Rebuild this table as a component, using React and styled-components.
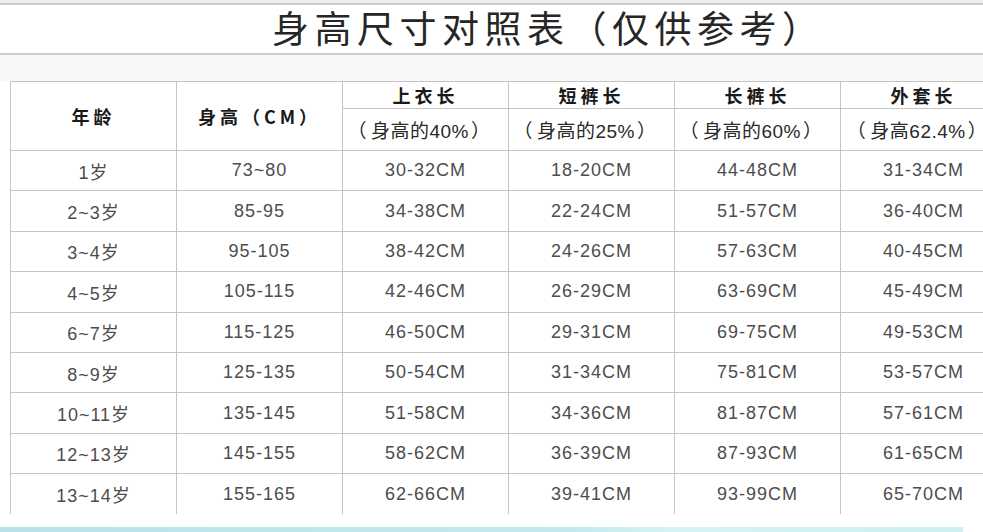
import React from 'react'
import styled, { createGlobalStyle } from 'styled-components'

const GlobalStyle = createGlobalStyle`
  html, body {
    margin: 0;
    padding: 0;
    background: #ffffff;
    overflow: hidden;
  }
  body {
    font-family: "Liberation Sans", "Noto Sans CJK SC", sans-serif;
  }
`

const Page = styled.div`
  width: 983px;
  height: 532px;
  display: flex;
  flex-direction: column;
  overflow: hidden;
`

const TopStrip = styled.div`
  height: 3px;
  background: #eeeeee;
`

const TitleBox = styled.div`
  width: 979px;
  height: 44px;
  border-top: 2px solid #cbcbcb;
  border-bottom: 2px solid #cbcbcb;
  border-right: 2px solid #d4d4d4;
  background: #ffffff;
  display: flex;
  align-items: center;
  padding: 0 0 4px 272px;
  box-sizing: content-box;
`

const Title = styled.h1`
  margin: 0;
  font-family: "Noto Sans CJK SC", sans-serif;
  font-weight: 400;
  font-size: 37px;
  letter-spacing: 5.5px;
  color: #262626;
  line-height: 40px;
`

const Gap = styled.div`
  height: 26px;
  background: #f8f8f6;
`

const TableWrap = styled.div`
  padding-left: 10px;
  background: #ffffff;
`

const Table = styled.table`
  border-collapse: collapse;
  table-layout: fixed;
  width: 996px;
  background: #ffffff;
`

const Cell = styled.td`
  border: 1px solid #c4c4c4;
  text-align: center;
  vertical-align: middle;
  padding: 0;
  color: ${p => (p.$head ? '#1a1a1a' : '#4d4d4d')};
  font-size: 18px;
  font-weight: ${p => (p.$head ? 700 : 400)};
  letter-spacing: ${p => (p.$head ? '4px' : '1px')};
  font-family: ${p => (p.$head ? '"Noto Sans CJK SC", sans-serif' : '"Liberation Sans", "Noto Sans CJK SC", sans-serif')};
  white-space: nowrap;
`

const SubCell = styled(Cell)`
  font-weight: 400;
  font-size: 19px;
  letter-spacing: 0.5px;
  color: #2a2a2a;
  padding-right: 14px;
  font-family: "Liberation Sans", "Noto Sans CJK SC", sans-serif;
`

const Paren = styled.span`
  font-family: "Noto Sans CJK SC", sans-serif;
  margin: ${p => (p.$open ? '0 4px 0 -2px' : '0 -3px 0 2px')};
`

const HeadRow = styled.tr`
  height: ${p => p.$h}px;
`

const Row = styled.tr`
  height: 40.4px;
  &:last-child td {
    border-bottom: none;
  }
`

const Spacer = styled.div`
  flex: 1;
`

const Band = styled.div`
  height: 5px;
  width: 963px;
  background: linear-gradient(90deg, #b7e3e8 0%, #c4eaee 60%, #d6f3f5 70%, #cdeff2 100%);
`

const cols = [
  ['上衣长', '身高的40%'],
  ['短裤长', '身高的25%'],
  ['长裤长', '身高的60%'],
  ['外套长', '身高62.4%'],
]

const rows = [
  ['1岁', '73~80', '30-32CM', '18-20CM', '44-48CM', '31-34CM'],
  ['2~3岁', '85-95', '34-38CM', '22-24CM', '51-57CM', '36-40CM'],
  ['3~4岁', '95-105', '38-42CM', '24-26CM', '57-63CM', '40-45CM'],
  ['4~5岁', '105-115', '42-46CM', '26-29CM', '63-69CM', '45-49CM'],
  ['6~7岁', '115-125', '46-50CM', '29-31CM', '69-75CM', '49-53CM'],
  ['8~9岁', '125-135', '50-54CM', '31-34CM', '75-81CM', '53-57CM'],
  ['10~11岁', '135-145', '51-58CM', '34-36CM', '81-87CM', '57-61CM'],
  ['12~13岁', '145-155', '58-62CM', '36-39CM', '87-93CM', '61-65CM'],
  ['13~14岁', '155-165', '62-66CM', '39-41CM', '93-99CM', '65-70CM'],
]

export default function App() {
  return (
    <>
      <GlobalStyle />
      <Page>
        <TopStrip />
        <TitleBox>
          <Title>身高尺寸对照表（仅供参考）</Title>
        </TitleBox>
        <Gap />
        <TableWrap>
          <Table>
            <colgroup>
              {[0, 1, 2, 3, 4, 5].map(i => (
                <col key={i} style={{ width: 166 }} />
              ))}
            </colgroup>
            <thead>
              <HeadRow $h={24}>
                <Cell as="th" $head rowSpan={2}>年龄</Cell>
                <Cell as="th" $head rowSpan={2}>身高（CM）</Cell>
                {cols.map(c => (
                  <Cell as="th" $head key={c[0]}>{c[0]}</Cell>
                ))}
              </HeadRow>
              <HeadRow $h={42}>
                {cols.map(c => (
                  <SubCell as="th" key={c[1]}>
                    <Paren $open>（</Paren>{c[1]}<Paren>）</Paren>
                  </SubCell>
                ))}
              </HeadRow>
            </thead>
            <tbody>
              {rows.map(r => (
                <Row key={r[0]}>
                  {r.map((v, i) => (
                    <Cell key={i}>{v}</Cell>
                  ))}
                </Row>
              ))}
            </tbody>
          </Table>
        </TableWrap>
        <Spacer />
        <Band />
      </Page>
    </>
  )
}
